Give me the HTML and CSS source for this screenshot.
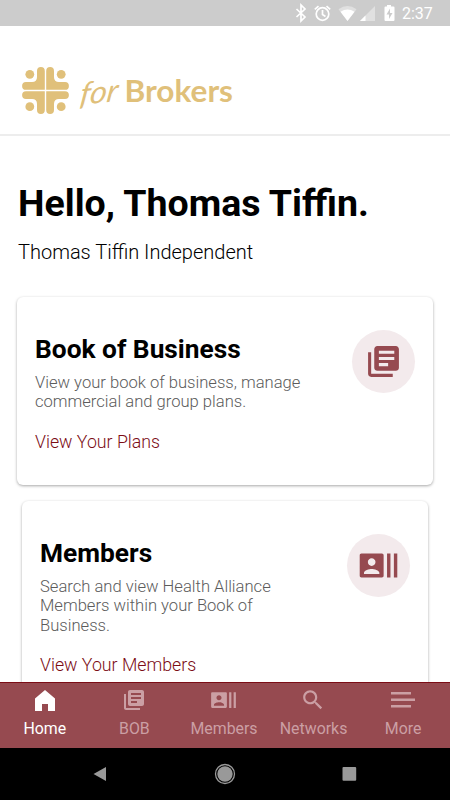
FILE: index.html
```html
<!DOCTYPE html>
<html lang="en">
<head>
  <meta charset="UTF-8">
  <meta name="viewport" content="width=device-width, initial-scale=1.0">
  <title>Health Alliance for Brokers</title>
  <link rel="stylesheet" href="styles.css">
</head>
<body>
  <svg class="defs" width="0" height="0">
    <symbol id="books" viewBox="0 0 24 24">
      <path d="M4 6H2v14c0 1.100.9 2 2 2h14v-2H4V6z"/>
      <path d="M20 2H8c-1.100 0-2 .9-2 2v12c0 1.100.9 2 2 2h12c1.100 0 2-.9 2-2V4c0-1.100-.9-2-2-2zm-1 9H9V9h10v2zm-4 4H9v-2h6v2zm4-8H9V5h10v2z"/>
    </symbol>
    <symbol id="members" viewBox="0 0 24 24">
      <path d="M21 5v14h2V5h-2zm-4 14h2V5h-2v14zM14 5H2c-.55 0-1 .45-1 1v12c0 .55.45 1 1 1h12c.55 0 1-.45 1-1V6c0-.55-.45-1-1-1zM8 7.750c1.240 0 2.250 1.010 2.250 2.250S9.240 12.250 8 12.250 5.750 11.240 5.750 10 6.760 7.750 8 7.750zM12.500 17h-9v-.75c0-1.500 3-2.250 4.500-2.250s4.500.75 4.500 2.250V17z"/>
    </symbol>
  </svg>

  <div class="status-bar">
    <svg width="114" height="27" viewBox="0 0 114 27">
      <path d="M1.500 9l8.500 8-4 4V5l4 4-8.500 8" fill="none" stroke="#fff" stroke-width="1.700"/>
      <g fill="none" stroke="#fff" stroke-width="1.700">
        <circle cx="27.500" cy="14" r="6.300"/>
        <path d="M27.500 10v4.500l3 2M19.800 9.300l3.700-3.200M35.200 9.300l-3.700-3.200"/>
      </g>
      <path d="M43.500 9.200q9-6.400 18 0l-9 11.800z" fill="#e0e0e0"/>
      <path d="M45.500 11.700q7-4.500 14 0l-7 9.300z" fill="#fff"/>
      <path d="M65 21h15V6z" fill="#e0e0e0"/>
      <path d="M65 21h5.500v-5.500z" fill="#fff"/>
      <path d="M92 5h4v1.500h2.500q1 0 1 1V20q0 1-1 1h-8q-1 0-1-1V7.500q0-1 1-1H92z" fill="#fff"/>
      <path d="M95 8.500l-3.500 6H94v4.500l3.500-6H95z" fill="#ccc"/>
    </svg>
    <span class="time">2:37</span>
  </div>

  <div class="header">
    <svg class="logo" width="240" height="60" viewBox="0 0 240 60">
      <defs>
        <g id="quarter">
          <circle cx="-15.700" cy="-16.200" r="4.400"/>
          <path d="M-.7-.7V-19.500a3.700 3.700 0 0 0-7.800 0V-13.500q0 5-5 5H-19.500a3.900 3.900 0 0 0 0 7.800z"/>
        </g>
      </defs>
      <g transform="translate(35.500 30.500)">
        <use href="#quarter"/>
        <use href="#quarter" transform="scale(-1 1)"/>
        <use href="#quarter" transform="scale(1 -1)"/>
        <use href="#quarter" transform="scale(-1 -1)"/>
      </g>
      <text class="logo-for" transform="translate(69 45) rotate(-6) skewX(-14)" textLength="38" lengthAdjust="spacingAndGlyphs">for</text>
      <text class="logo-brokers" x="114.500" y="42" textLength="108.500" lengthAdjust="spacingAndGlyphs">Brokers</text>
    </svg>
  </div>

  <div class="content">
    <h1>Hello, Thomas Tiffin.</h1>
    <p class="agency">Thomas Tiffin Independent</p>

    <div class="card">
      <div class="card-text">
        <h2>Book of Business</h2>
        <p>View your book of business, manage commercial and group plans.</p>
        <a href="#">View Your Plans</a>
      </div>
      <div class="card-icon">
        <svg width="37" height="37"><use href="#books"/></svg>
      </div>
    </div>

    <div class="card card-small">
      <div class="card-text">
        <h2>Members</h2>
        <p>Search and view Health Alliance Members within your Book of Business.</p>
        <a href="#">View Your Members</a>
      </div>
      <div class="card-icon">
        <svg width="41" height="41"><use href="#members"/></svg>
      </div>
    </div>
  </div>

  <div class="tabs">
    <div class="tab active">
      <svg width="24" height="24" viewBox="0 0 24 24"><path d="M12 2L2 10.500V23H9V16h6v7h7V10.500z"/></svg>
      <span>Home</span>
    </div>
    <div class="tab">
      <svg width="24" height="24"><use href="#books"/></svg>
      <span>BOB</span>
    </div>
    <div class="tab">
      <svg width="27" height="24"><use href="#members" width="27" height="27" y="-1.500"/></svg>
      <span>Members</span>
    </div>
    <div class="tab">
      <svg width="26" height="24" viewBox="1 1 24 22"><path d="M15.500 14h-.79l-.28-.27C15.410 12.590 16 11.110 16 9.500 16 5.910 13.090 3 9.500 3S3 5.910 3 9.500 5.910 16 9.500 16c1.610 0 3.090-.59 4.230-1.570l.27.28v.79l5 4.990L20.490 19l-4.990-5zm-6 0C7.010 14 5 11.990 5 9.500S7.010 5 9.500 5 14 7.010 14 9.500 11.990 14 9.500 14z"/></svg>
      <span>Networks</span>
    </div>
    <div class="tab">
      <svg width="24" height="24" viewBox="0 0 24 24"><path d="M0 4h20v2.500H0zM0 10.500h24V13H0zM0 17h20v2.500H0z"/></svg>
      <span>More</span>
    </div>
  </div>

  <div class="nav-bar">
    <svg width="24" height="24" viewBox="0 0 24 24"><path d="M5.500 12L18 5v14z"/></svg>
    <svg width="24" height="24" viewBox="0 0 24 24"><circle cx="12" cy="12" r="7.700"/><circle cx="12" cy="12" r="9.500" class="ring"/></svg>
    <svg width="24" height="24" viewBox="0 0 24 24"><rect x="4.500" y="5" width="13.700" height="13.700" rx="1"/></svg>
  </div>
</body>
</html>
```
FILE: styles.css
```css
* {
  box-sizing: border-box;
}
body {
  display: flex;
  flex-direction: column;
  height: 800px;
  margin: 0;
  overflow: hidden;
  background: #fff;
  color: #000;
  font-family: Roboto, sans-serif;
}
h1, h2, p {
  margin: 0;
}
.defs {
  display: none;
}
.status-bar {
  display: flex;
  flex: none;
  align-items: center;
  height: 26px;
  padding-left: 295px;
  background: #ccc;
  color: #fff;
}
.time {
  margin-left: -7px;
  padding-top: 2px;
  font-size: 16px;
  font-weight: 400;
  line-height: 24px;
}
.header {
  flex: none;
  height: 110px;
  padding: 34px 0 0 10px;
  border-bottom: 2px solid #ededed;
}
.logo {
  display: block;
  fill: #e0c07a;
}
.logo-for {
  font-family: Lato, sans-serif;
  font-size: 31px;
  font-style: italic;
  font-weight: 400;
}
.logo-brokers {
  font-family: Lato, sans-serif;
  font-size: 31px;
  font-weight: 700;
}
.content {
  flex: 1;
  min-height: 0;
  padding: 43px 17px 0;
  overflow: hidden;
}
h1 {
  margin-left: 1px;
  font-size: 37.500px;
  font-weight: 700;
  line-height: 48px;
  white-space: nowrap;
}
.agency {
  margin: 13px 0 32px 1px;
  font-size: 20px;
  font-weight: 300;
  line-height: 25px;
}
.card {
  display: flex;
  justify-content: space-between;
  height: 188px;
  padding: 33px 18px 0;
  border-radius: 6px;
  box-shadow: 0 1px 3px rgba(0, 0, 0, 0.35);
}
.card-small {
  margin: 16px 5px 0;
  height: 210px;
}
.card-text {
  width: 280px;
}
h2 {
  font-size: 26.300px;
  font-weight: 700;
  line-height: 38px;
}
.card-text p {
  margin-top: 5px;
  color: #5c5c5c;
  font-size: 16.600px;
  font-weight: 300;
  line-height: 19.300px;
}
.card-text a {
  display: block;
  margin-top: 18px;
  color: #7c0d16;
  font-size: 17.750px;
  font-weight: 300;
  line-height: 24px;
  text-decoration: none;
}
.card-icon {
  display: flex;
  align-items: center;
  justify-content: center;
  width: 63px;
  height: 63px;
  border-radius: 50%;
  background: #f3eaec;
  fill: #964a50;
}
.tabs {
  display: flex;
  flex: none;
  height: 66px;
  padding-right: 2px;
  border-top: 1px solid #7c0d16;
  background: #964a50;
}
.tab {
  display: flex;
  flex: 1;
  flex-direction: column;
  align-items: center;
  color: #cb9fa4;
  fill: #cb9fa4;
  font-size: 15.900px;
}
.tab svg {
  flex: none;
  margin-top: 5px;
}
.tab span {
  margin-top: auto;
  margin-bottom: 7px;
  line-height: 24px;
}
.active {
  color: #fff;
  fill: #fff;
}
.nav-bar {
  display: flex;
  flex: none;
  justify-content: center;
  gap: 101px;
  height: 52px;
  padding-top: 14px;
  background: #000;
  fill: #999;
}
.ring {
  fill: none;
  stroke: #999;
  stroke-width: 1.300;
}
```
